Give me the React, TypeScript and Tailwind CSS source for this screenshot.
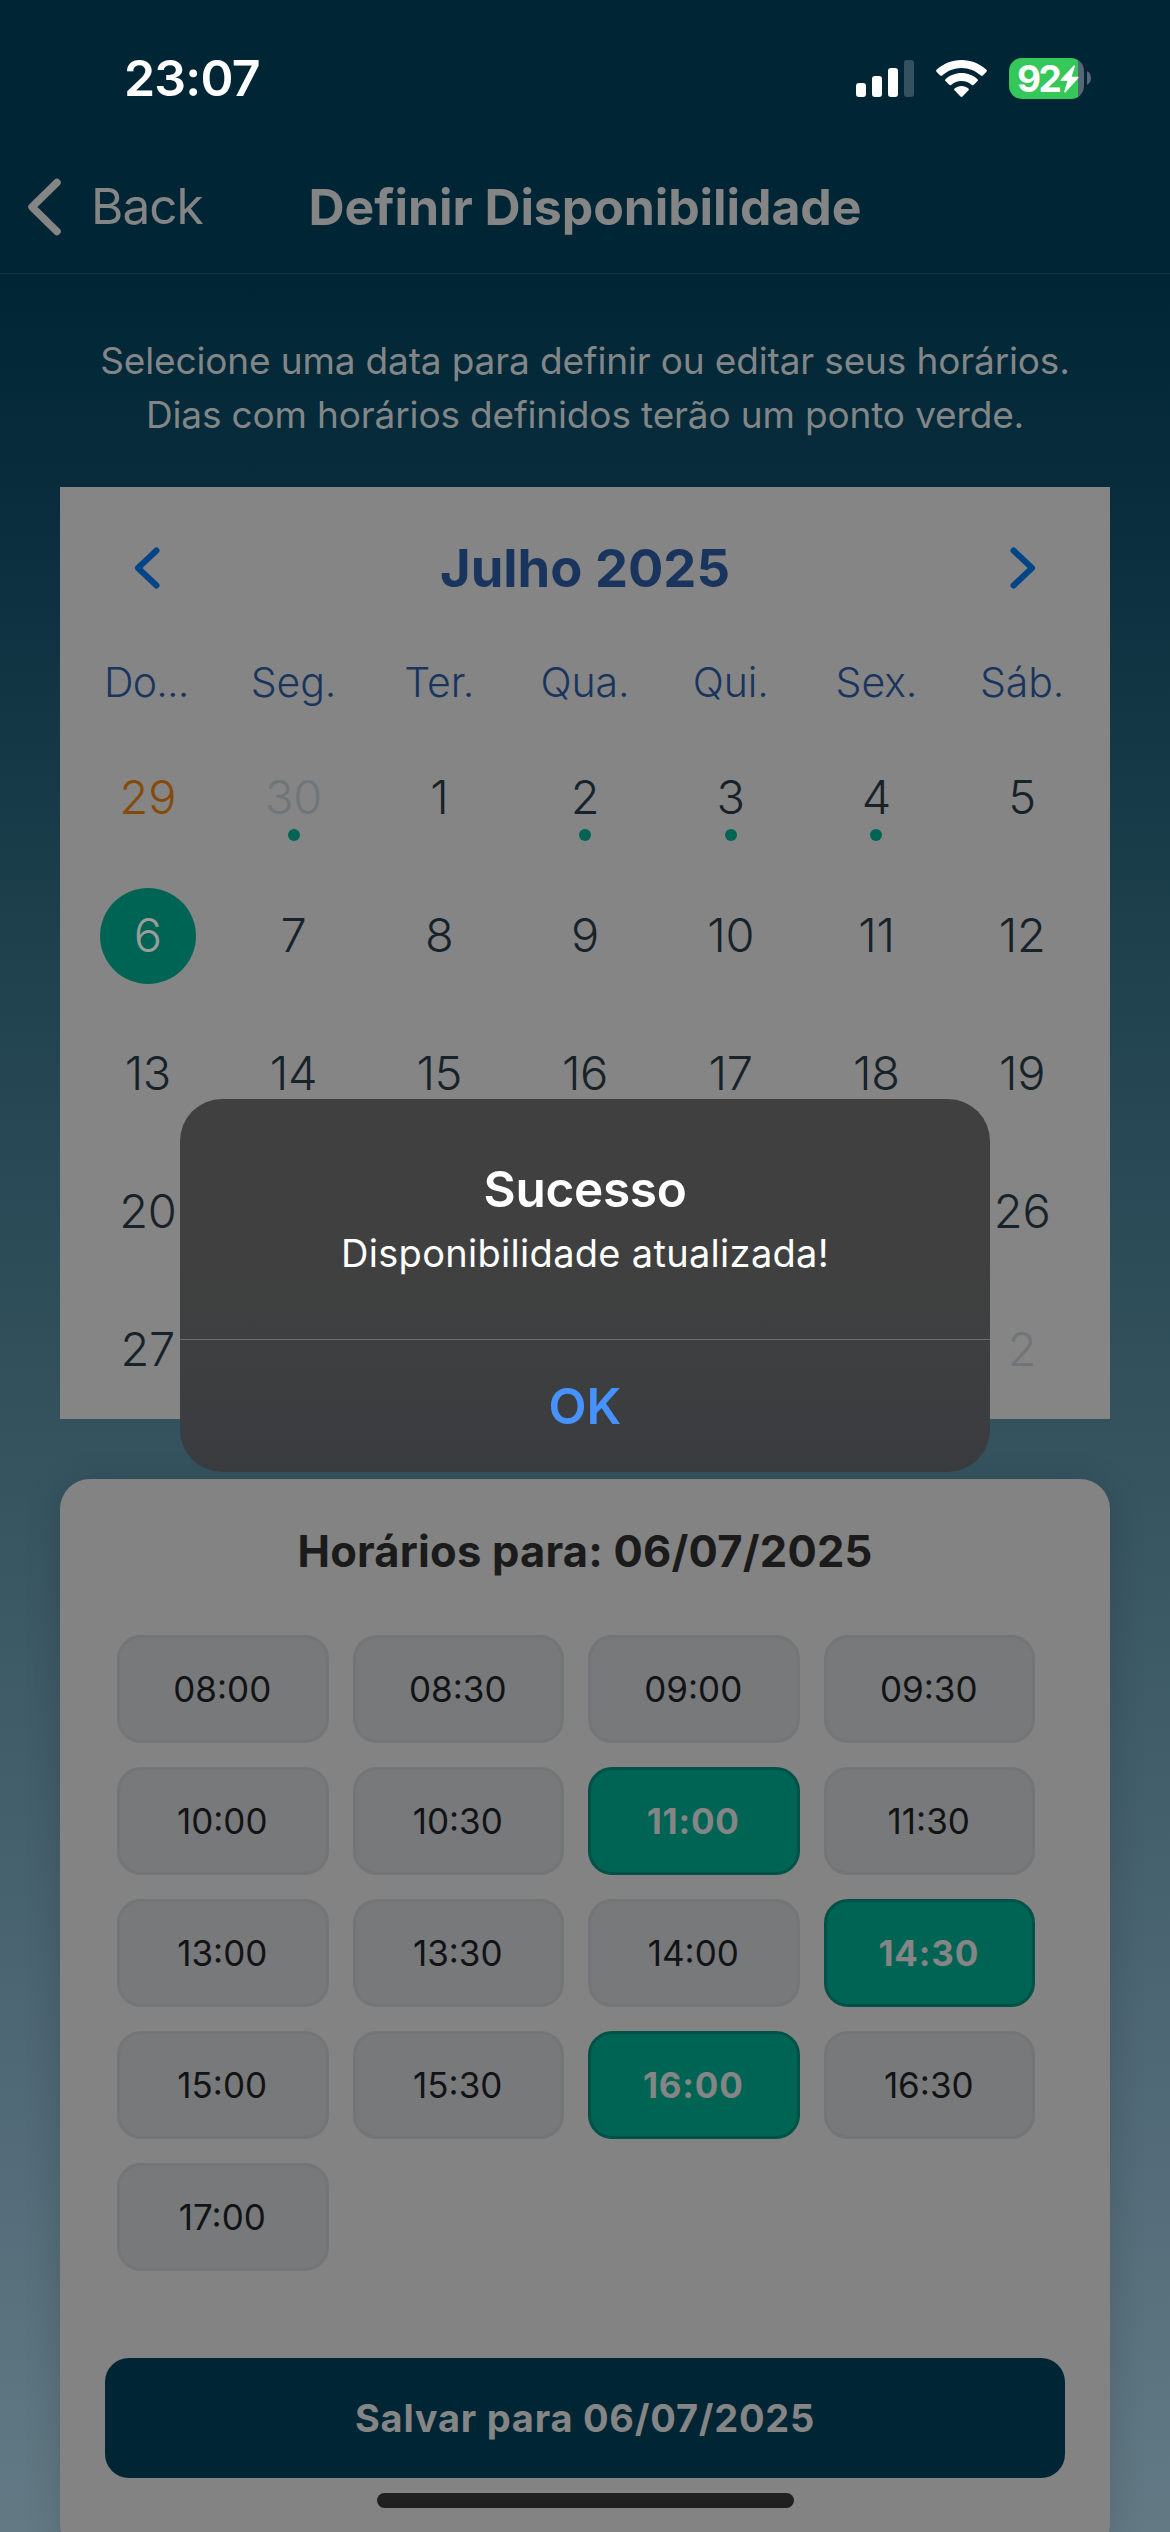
import React from "react";

const WEEKDAYS = ["Do...", "Seg.", "Ter.", "Qua.", "Qui.", "Sex.", "Sáb."];

type Day = { n: number; kind?: "today" | "muted" | "selected"; dot?: boolean };

const DAYS: Day[] = [
  { n: 29, kind: "today" },
  { n: 30, kind: "muted", dot: true },
  { n: 1 },
  { n: 2, dot: true },
  { n: 3, dot: true },
  { n: 4, dot: true },
  { n: 5 },
  { n: 6, kind: "selected" },
  ...Array.from({ length: 25 }, (_, i) => ({ n: i + 7 })),
  { n: 1, kind: "muted" },
  { n: 2, kind: "muted" },
];

const SLOTS = [
  "08:00", "08:30", "09:00", "09:30",
  "10:00", "10:30", "11:00", "11:30",
  "13:00", "13:30", "14:00", "14:30",
  "15:00", "15:30", "16:00", "16:30",
  "17:00",
];
const SELECTED = ["11:00", "14:30", "16:00"];

function StatusBar() {
  return (
    <div className="flex h-[140px] items-center justify-between pt-4 pr-[79px] pl-[124px] text-white">
      <span className="text-[50px] leading-[52px] font-semibold tracking-[-0.8px]">23:07</span>
      <div className="flex items-center">
        <svg width="58" height="37" viewBox="0 0 58 37" fill="white">
          <rect x="0" y="23" width="10" height="14" rx="3" />
          <rect x="16" y="16" width="10" height="21" rx="3" />
          <rect x="32" y="8" width="10" height="29" rx="3" />
          <rect x="48" y="0" width="10" height="37" rx="3" opacity="0.2" />
        </svg>
        <svg className="ml-[22px]" width="51" height="37" viewBox="0 0 51 37" fill="white">
          <path d="M25.5 0C16 0 7.200 3.600 .6 9.800c-.6.6-.6 1.400-.1 2L4.200 15.500c.5.500 1.300.5 1.900 0C11.300 10.700 18.100 7.900 25.500 7.900s14.200 2.800 19.400 7.600c.6.500 1.400.5 1.900 0l3.700-3.700c.5-.6.5-1.400-.1-2C43.800 3.600 35 0 25.500 0z" />
          <path d="M25.500 13c-6.100 0-11.700 2.300-16 6.200-.6.500-.6 1.400 0 1.900l3.700 3.700c.5.500 1.300.5 1.900.1 2.800-2.500 6.400-4 10.400-4s7.600 1.500 10.400 4c.6.400 1.400.4 1.900-.1l3.700-3.700c.6-.5.6-1.400 0-1.900-4.300-3.900-9.900-6.200-16-6.200z" />
          <path d="M25.500 26c-2.600 0-5 .9-6.900 2.400-.6.500-.6 1.300-.1 1.900l6 6.200c.6.600 1.400.6 2 0l6-6.200c.5-.6.5-1.400-.1-1.900C30.500 26.900 28.100 26 25.500 26z" />
        </svg>
        <div className="relative ml-[22px] flex h-[41px] w-[75px] items-center rounded-[13px] bg-[linear-gradient(90deg,#34c759_69px,#566675_69px)] pl-[8px]">
          <span className="text-[37px] leading-[41px] font-bold tracking-[-2.5px]">92</span>
          <svg className="absolute top-[7px] left-[51px]" width="19" height="28" viewBox="0 0 19 28" fill="white">
            <path d="M13.500.8 .8 14.500c-.7.800-.4 1.500.6 1.500h6L4.300 26.200c-.4 1.300.7 1.800 1.500.8L18.200 13.300c.7-.8.4-1.500-.6-1.500h-6L14.900 1.600C15.300.4 14.300-.1 13.500.8z" />
          </svg>
        </div>
        <svg className="ml-[3px]" width="4" height="14" viewBox="0 0 4 14" fill="#566675">
          <path d="M0 0c2.500 1.200 4 4 4 7s-1.500 5.800-4 7z" />
        </svg>
      </div>
    </div>
  );
}

function NavBar() {
  return (
    <div className="relative flex h-[134px] items-center justify-center border-b border-[#123443]">
      <div className="absolute top-0 bottom-0 left-[27px] flex items-center text-[#858585]">
        <svg width="34" height="58" viewBox="0 0 34 58" fill="none" stroke="currentColor" strokeWidth="7.5" strokeLinecap="round" strokeLinejoin="round">
          <path d="M30 4.500 5 29l25 24.500" />
        </svg>
        <span className="ml-[30px] text-[49.5px] leading-none tracking-[-1px]">Back</span>
      </div>
      <h1 className="text-[50px] leading-[52px] font-[650] tracking-[-0.100px] text-[#858585]">Definir Disponibilidade</h1>
    </div>
  );
}

function Chevron({ flip = false }: { flip?: boolean }) {
  return (
    <svg className={flip ? "rotate-180" : ""} width="26" height="42" viewBox="0 0 26 42" fill="none" stroke="#004488" strokeWidth="6" strokeLinecap="round" strokeLinejoin="round">
      <path d="M22.500 3.500 4 21l18.500 17.500" />
    </svg>
  );
}

function DayCell({ day }: { day: Day }) {
  const color =
    day.kind === "today" ? "text-[#864a08]"
    : day.kind === "muted" ? "text-[#707579]"
    : day.kind === "selected" ? "text-[#9a9d9b]"
    : "text-[#172329]";
  return (
    <div className="flex h-[138px] items-center justify-center">
      <div className={`relative flex size-24 items-center justify-center rounded-full ${day.kind === "selected" ? "bg-[#006454]" : ""}`}>
        <span className={`pb-[2px] text-[47px] leading-[48px] font-light tracking-[-0.3px] ${color}`}>{day.n}</span>
        {day.dot && <span className="absolute top-[79px] left-[42px] size-3 rounded-full bg-[#006454]" />}
      </div>
    </div>
  );
}

function Calendar() {
  return (
    <section className="mx-[60px] mt-[45px] bg-[#858585] px-[15px]">
      <div className="flex h-[162px] items-center justify-between pr-[59px] pl-[59px]">
        <Chevron />
        <h2 className="text-[52.5px] leading-none font-bold text-[#1a355d]">Julho 2025</h2>
        <Chevron flip />
      </div>
      <div className="grid h-[67px] grid-cols-7 items-center">
        {WEEKDAYS.map((w, i) => (
          <span
            key={w}
            className={`text-center text-[41px] leading-none font-light text-[#1a355d] ${i === 0 ? "-ml-[3px] tracking-[-0.8px]" : "tracking-[-0.1px]"}`}
          >
            {w}
          </span>
        ))}
      </div>
      <div className="mt-[13px] grid grid-cols-7">
        {DAYS.map((d, i) => (
          <DayCell key={i} day={d} />
        ))}
      </div>
    </section>
  );
}

function Slots() {
  return (
    <section className="mx-[60px] mt-[60px] h-[1075px] shrink-0 rounded-[30px] bg-[#828382] px-[45px] shadow-[0_6px_36px_rgba(0,0,0,0.16)]">
      <h2 className="flex h-[145px] items-center justify-center text-[43.5px] leading-none font-bold tracking-[0.200px] text-[#1b1b1b]">
        Horários para: 06/07/2025
      </h2>
      <div className="mt-[11px] ml-3 grid grid-cols-[repeat(4,211.5px)] gap-6">
        {SLOTS.map((s) => (
          <div
            key={s}
            className={`flex h-[108px] items-center justify-center rounded-[24px] border-[3px] pr-[1px] text-[35px] leading-none ${
              SELECTED.includes(s)
                ? "border-[#005247] bg-[#006454] font-bold tracking-[0.800px] text-[#858585]"
                : "border-[#737577] bg-[#78797b] text-[#121315]"
            }`}
          >
            {s}
          </div>
        ))}
      </div>
      <button className="mt-[87px] flex h-[120px] w-full items-center justify-center rounded-[24px] bg-[#002636] text-[38px] leading-none font-bold tracking-[0.750px] text-[#858585]">
        Salvar para 06/07/2025
      </button>
    </section>
  );
}

function Alert() {
  return (
    <div className="absolute top-[1099px] left-[180px] flex h-[373px] w-[810px] flex-col overflow-hidden rounded-[42px] bg-[linear-gradient(180deg,#404040_0%,#404040_40%,#3e3f40_65%,#393c3f_100%)] text-center">
      <div className="flex h-[241px] flex-col items-center border-b border-[#6d6e6f] pt-[60px]">
        <h3 className="text-[49.5px] leading-[60px] font-semibold tracking-[-0.300px] text-white">Sucesso</h3>
        <p className="mt-[7px] text-[38px] leading-[54px] tracking-[0.300px] text-white">Disponibilidade atualizada!</p>
      </div>
      <button className="flex-1 pt-[2px] text-[49.5px] leading-none font-semibold text-[#4693ff]">OK</button>
    </div>
  );
}

export default function App() {
  return (
    <div className="relative h-[2532px] w-[1170px] overflow-hidden bg-[linear-gradient(180deg,#002636_0px,#002636_274px,#082c3c_480px,#21434f_1000px,#34535f_1450px,#4c6673_2000px,#637a85_2532px)] font-['Inter',sans-serif]">
      <StatusBar />
      <NavBar />
      <p className="mt-[60px] text-center text-[37px] leading-[54px] tracking-[-0.150px] text-[#838687]">
        Selecione uma data para definir ou editar seus horários.
        <br />
        Dias com horários definidos terão um ponto verde.
      </p>
      <Calendar />
      <Slots />
      <Alert />
      <div className="absolute top-[2493px] left-[377px] h-[15px] w-[417px] rounded-full bg-[#202020]" />
    </div>
  );
}
